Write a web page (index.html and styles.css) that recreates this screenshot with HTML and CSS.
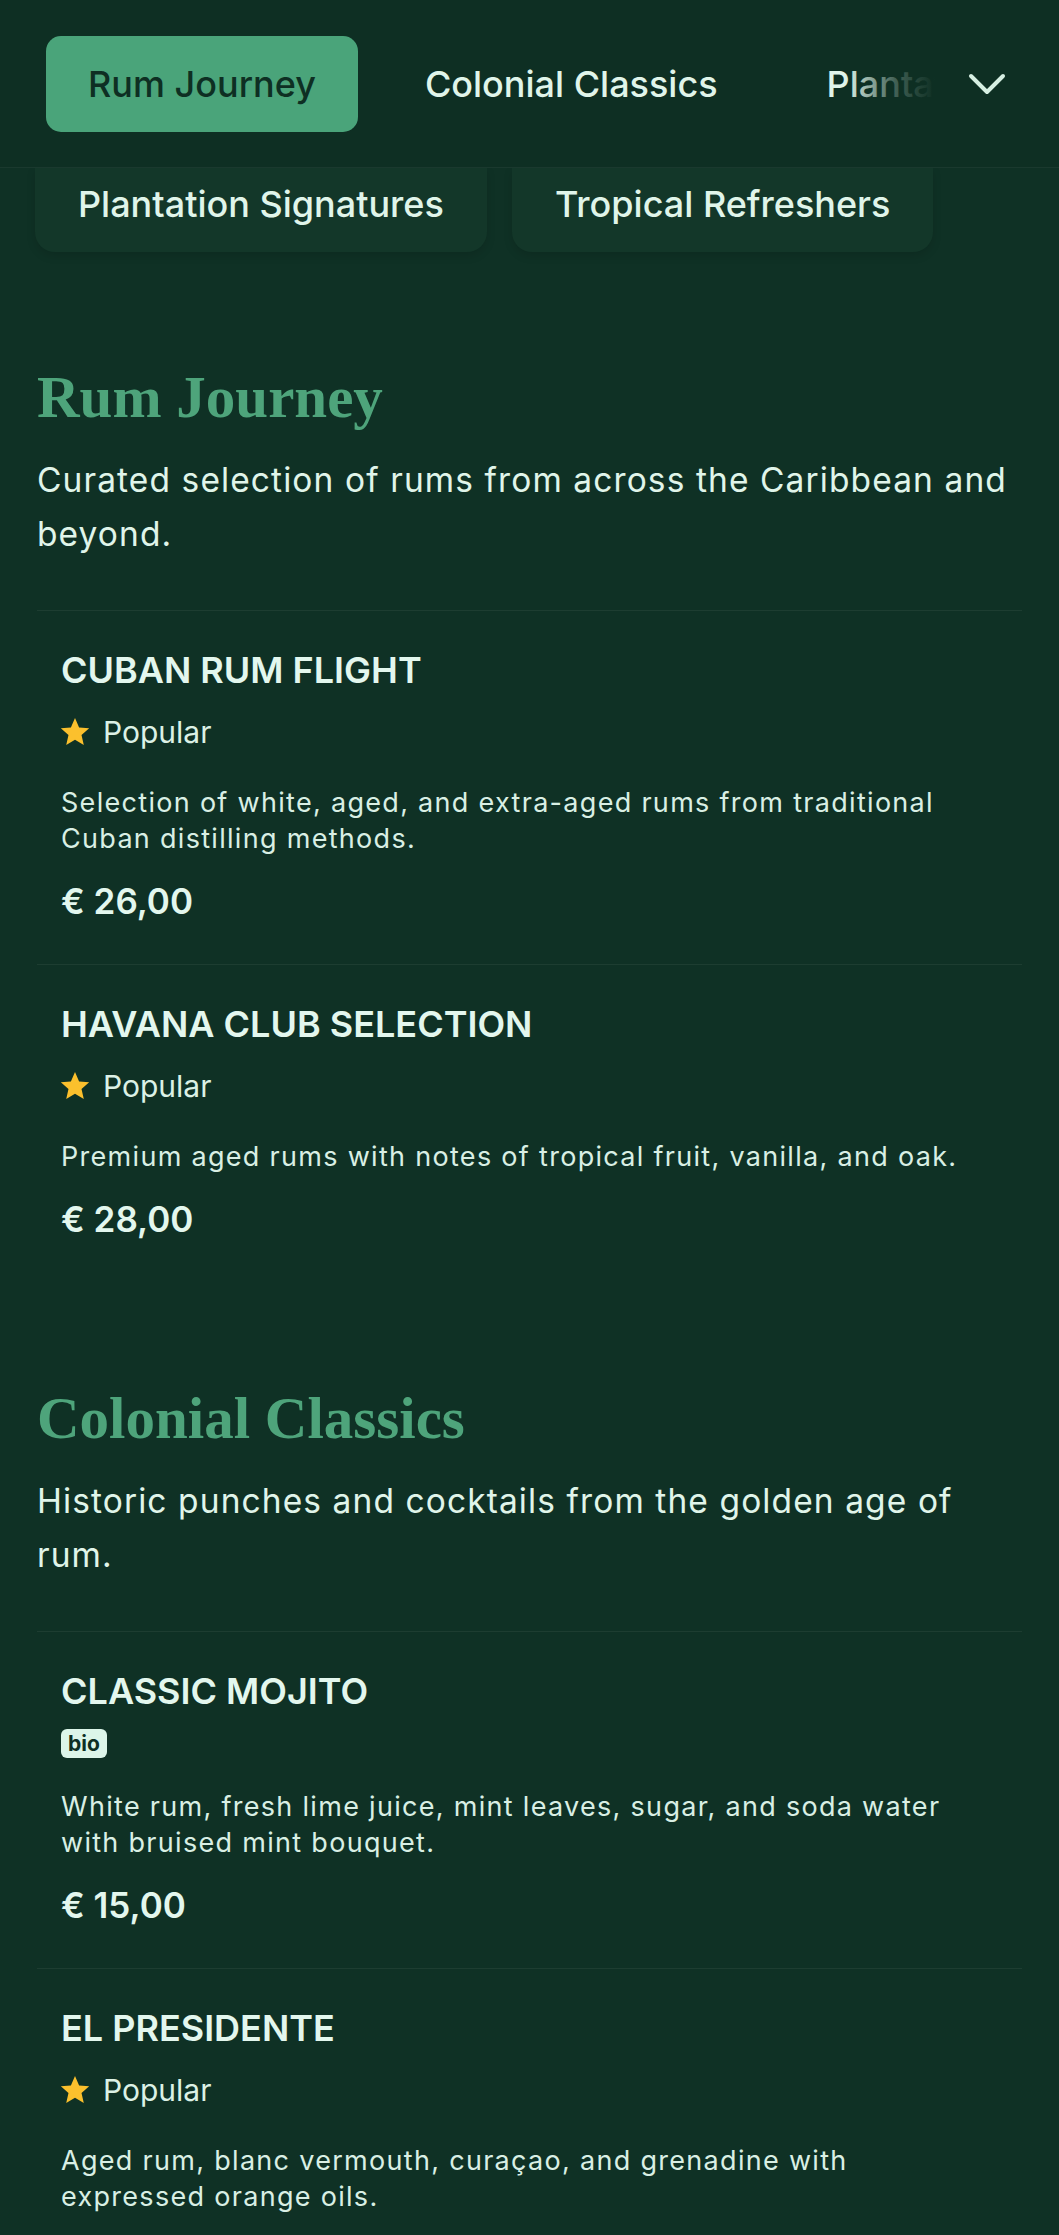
FILE: index.html
```html
<!DOCTYPE html>
<html lang="en">
<head>
<meta charset="utf-8">
<title>Rum Menu</title>
<link rel="stylesheet" href="styles.css">
</head>
<body>
<header class="topbar">
  <nav class="tabs">
    <span class="tab tab-active">Rum Journey</span>
    <span class="tab">Colonial Classics</span>
    <span class="tab">Plantation Signatures</span>
    <span class="tab">Tropical Refreshers</span>
  </nav>
  <div class="tabs-fade">
    <svg class="chevron" viewBox="0 0 40 26" width="40" height="26" aria-hidden="true">
      <polyline points="4,5 20,21 36,5" fill="none" stroke="#d6efe2" stroke-width="4" stroke-linecap="round" stroke-linejoin="round"/>
    </svg>
  </div>
</header>

<div class="tab-panel">
  <span class="panel-card">Plantation Signatures</span>
  <span class="panel-card">Tropical Refreshers</span>
</div>

<main>
  <section class="section">
    <h2 class="section-title">Rum Journey</h2>
    <p class="section-desc">Curated selection of rums from across the Caribbean and beyond.</p>
    <div class="items">
      <article class="item">
        <h3 class="item-name">CUBAN RUM FLIGHT</h3>
        <div class="popular">
          <svg class="star" viewBox="0 0 24 24" width="34" height="34" aria-hidden="true"><path d="M12 2.2l2.9 6.6 7.1.6-5.4 4.7 1.6 7-6.2-3.7-6.2 3.7 1.6-7L2 9.4l7.1-.6z" fill="#fbc02d"/></svg>
          <span>Popular</span>
        </div>
        <p class="item-desc">Selection of white, aged, and extra-aged rums from traditional Cuban distilling methods.</p>
        <div class="price">€ 26,00</div>
      </article>
      <article class="item">
        <h3 class="item-name">HAVANA CLUB SELECTION</h3>
        <div class="popular">
          <svg class="star" viewBox="0 0 24 24" width="34" height="34" aria-hidden="true"><path d="M12 2.2l2.9 6.6 7.1.6-5.4 4.7 1.6 7-6.2-3.7-6.2 3.7 1.6-7L2 9.4l7.1-.6z" fill="#fbc02d"/></svg>
          <span>Popular</span>
        </div>
        <p class="item-desc">Premium aged rums with notes of tropical fruit, vanilla, and oak.</p>
        <div class="price">€ 28,00</div>
      </article>
    </div>
  </section>

  <section class="section">
    <h2 class="section-title">Colonial Classics</h2>
    <p class="section-desc">Historic punches and cocktails from the golden age of rum.</p>
    <div class="items">
      <article class="item">
        <h3 class="item-name">CLASSIC MOJITO</h3>
        <div class="badges"><span class="badge">bio</span></div>
        <p class="item-desc item-desc-badge">White rum, fresh lime juice, mint leaves, sugar, and soda water with bruised mint bouquet.</p>
        <div class="price">€ 15,00</div>
      </article>
      <article class="item">
        <h3 class="item-name">EL PRESIDENTE</h3>
        <div class="popular">
          <svg class="star" viewBox="0 0 24 24" width="34" height="34" aria-hidden="true"><path d="M12 2.2l2.9 6.6 7.1.6-5.4 4.7 1.6 7-6.2-3.7-6.2 3.7 1.6-7L2 9.4l7.1-.6z" fill="#fbc02d"/></svg>
          <span>Popular</span>
        </div>
        <p class="item-desc">Aged rum, blanc vermouth, curaçao, and grenadine with expressed orange oils.</p>
      </article>
    </div>
  </section>
</main>
</body>
</html>
```

FILE: styles.css
```css
* {
  box-sizing: border-box;
}

html, body {
  margin: 0;
  padding: 0;
  background: #0f3125;
}

body {
  font-family: Inter, "Noto Sans", "Liberation Sans", sans-serif;
  color: #e0f5ea;
  overflow: hidden;
}

.topbar {
  position: relative;
  z-index: 2;
  height: 168px;
  background: #0e2f23;
  border-bottom: 1px solid rgba(255, 255, 255, 0.05);
  overflow: hidden;
}

.tabs {
  display: flex;
  gap: 25px;
  padding: 36px 0 0 46px;
  white-space: nowrap;
}

.tab {
  flex: none;
  display: flex;
  align-items: center;
  height: 96px;
  padding: 0 42px;
  border-radius: 15px;
  font-size: 36px;
  font-weight: 500;
  color: #e0f5ea;
}

.tab-active {
  background: #4aa47a;
  color: #0e2f23;
}

.tabs-fade {
  position: absolute;
  top: 0;
  right: 0;
  bottom: 0;
  width: 214px;
  display: flex;
  align-items: center;
  justify-content: flex-end;
  padding: 0 52px 0 0;
  background: linear-gradient(to right, rgba(14, 47, 35, 0) 0px, rgba(14, 47, 35, 0.75) 50px, #0e2f23 90px);
}

.chevron {
  display: block;
}

.tab-panel {
  display: flex;
  gap: 25px;
  padding: 0 0 0 35px;
  margin-bottom: 9px;
}

.panel-card {
  display: flex;
  align-items: center;
  height: 84px;
  padding: 0 43px 12px;
  background: #133729;
  border-radius: 0 0 20px 20px;
  box-shadow: 0 4px 10px rgba(0, 0, 0, 0.12);
  font-size: 36px;
  font-weight: 500;
  white-space: nowrap;
  color: #e0f5ea;
}

.section {
  padding: 98px 37px 0;
}

.section-title {
  margin: 0 0 18px;
  font-family: "Liberation Serif", "DejaVu Serif", serif;
  font-weight: 700;
  font-size: 59px;
  line-height: 76px;
  color: #4ea47b;
}

.section-desc {
  margin: 0;
  font-size: 33.5px;
  line-height: 54px;
  letter-spacing: 1.1px;
  color: #e0f5ea;
}

.items {
  margin-top: 49px;
}

.item {
  border-top: 1px solid rgba(255, 255, 255, 0.06);
  padding: 36px 24px 40px;
}

.item-name {
  margin: 0;
  font-size: 36px;
  line-height: 47px;
  font-weight: 600;
  color: #e3f7ee;
}

.popular {
  display: flex;
  align-items: center;
  gap: 11px;
  height: 36px;
  margin-top: 20px;
  font-size: 30px;
  line-height: 36px;
  color: #dcf1e6;
}

.star {
  display: block;
  flex: none;
  margin-left: -3px;
}

.badges {
  display: flex;
  margin-top: 14px;
}

.badge {
  display: flex;
  align-items: center;
  height: 29px;
  padding: 0 7px;
  border-radius: 6px;
  background: #dcf5e9;
  color: #0e2f23;
  font-size: 21px;
  font-weight: 700;
  line-height: 29px;
}

.item-desc {
  margin: 35px 0 0;
  font-size: 27px;
  line-height: 36px;
  letter-spacing: 1.3px;
  color: #d9efe4;
}

.item-desc-badge {
  margin-top: 31px;
}

.price {
  margin-top: 21px;
  font-size: 35px;
  line-height: 46px;
  font-weight: 600;
  color: #e3f7ee;
}
```
